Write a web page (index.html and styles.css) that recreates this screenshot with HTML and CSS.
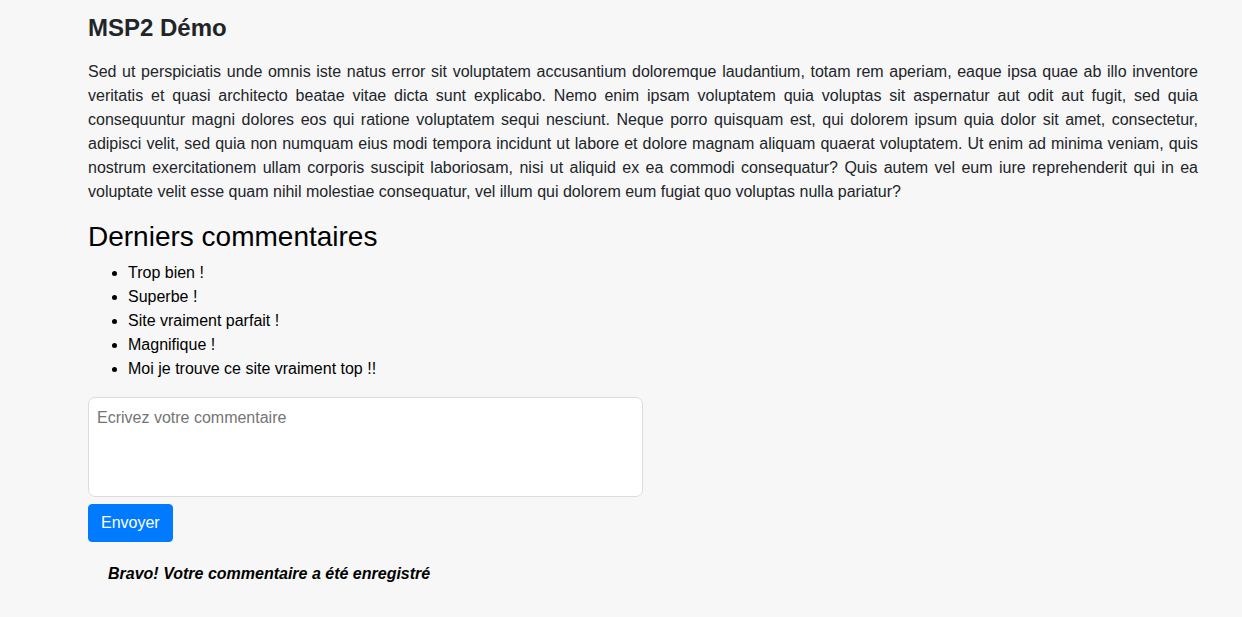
FILE: index.html
```html
<!DOCTYPE html>
<html lang="fr">
<head>
<meta charset="utf-8">
<title>MSP2 Démo</title>
<link rel="stylesheet" href="styles.css">
</head>
<body>
<main class="page">
  <h1 class="title">MSP2 Démo</h1>
  <p class="intro">Sed ut perspiciatis unde omnis iste natus error sit voluptatem accusantium doloremque laudantium, totam rem aperiam, eaque ipsa quae ab illo inventore veritatis et quasi architecto beatae vitae dicta sunt explicabo. Nemo enim ipsam voluptatem quia voluptas sit aspernatur aut odit aut fugit, sed quia consequuntur magni dolores eos qui ratione voluptatem sequi nesciunt. Neque porro quisquam est, qui dolorem ipsum quia dolor sit amet, consectetur, adipisci velit, sed quia non numquam eius modi tempora incidunt ut labore et dolore magnam aliquam quaerat voluptatem. Ut enim ad minima veniam, quis nostrum exercitationem ullam corporis suscipit laboriosam, nisi ut aliquid ex ea commodi consequatur? Quis autem vel eum iure reprehenderit qui in ea voluptate velit esse quam nihil molestiae consequatur, vel illum qui dolorem eum fugiat quo voluptas nulla pariatur?</p>
  <h2 class="subtitle">Derniers commentaires</h2>
  <ul class="comments">
    <li>Trop bien !</li>
    <li>Superbe !</li>
    <li>Site vraiment parfait !</li>
    <li>Magnifique !</li>
    <li>Moi je trouve ce site vraiment top !!</li>
  </ul>
  <form class="comment-form">
    <textarea class="comment-input" placeholder="Ecrivez votre commentaire"></textarea>
    <button type="button" class="btn-send">Envoyer</button>
  </form>
  <p class="success">Bravo! Votre commentaire a été enregistré</p>
</main>
</body>
</html>
```
FILE: styles.css
```css
html, body {
  margin: 0;
  padding: 0;
}
body {
  background: #f7f7f7;
  color: #212529;
  font-family: "Liberation Sans", Arial, sans-serif;
  font-size: 16px;
  line-height: 24px;
}
.page {
  width: 1110px;
  padding: 14px 0 0 88px;
}
.title {
  margin: 0 0 17px;
  font-size: 24px;
  line-height: 28.8px;
  font-weight: 700;
  color: #212529;
}
.intro {
  margin: 0 0 16px;
  text-align: justify;
}
.subtitle {
  margin: 0 0 8px;
  font-size: 28px;
  line-height: 33.6px;
  font-weight: 400;
  color: #000;
}
.comments {
  margin: 0 0 16px;
  padding-left: 40px;
  color: #000;
}
.comment-form {
  display: flex;
  flex-direction: column;
  align-items: flex-start;
  gap: 7px;
}
.comment-input {
  box-sizing: border-box;
  width: 555px;
  height: 100px;
  padding: 8px;
  border: 1px solid #dcdcdc;
  border-radius: 7px;
  background: #fff;
  font-family: "Liberation Sans", Arial, sans-serif;
  font-size: 16px;
  line-height: 24px;
  resize: none;
  outline: none;
}
.comment-input::placeholder {
  color: #757575;
}
.btn-send {
  box-sizing: border-box;
  height: 38px;
  padding: 6px 12px;
  border: 1px solid #007bff;
  border-radius: 4px;
  background: #007bff;
  color: #fff;
  font-family: "Liberation Sans", Arial, sans-serif;
  font-size: 16px;
  line-height: 24px;
}
.success {
  margin: 20px 0 0 20px;
  font-weight: 700;
  font-style: italic;
  color: #000;
}
```
